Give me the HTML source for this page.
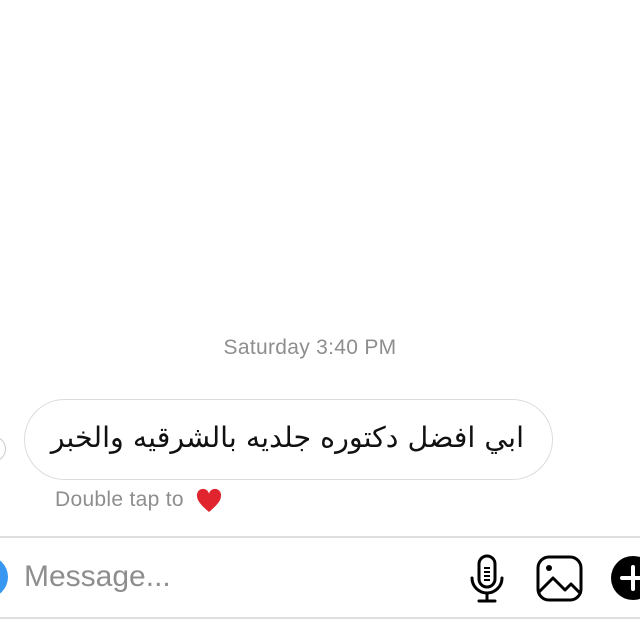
<!DOCTYPE html>
<html><head><meta charset="utf-8"><style>
html,body{margin:0;padding:0;width:640px;height:640px;background:#fff;overflow:hidden;position:relative;font-family:"Liberation Sans",sans-serif}
.ts{position:absolute;top:336px;left:0;width:620px;text-align:center;font-size:21px;color:#8e8e8e;letter-spacing:0.3px}
.bub{position:absolute;left:24px;top:399px;width:529px;height:81px;border:1.5px solid #dcdcdc;border-radius:41px;box-sizing:border-box}
.bub span{position:absolute;right:28px;top:21px;font-size:28.5px;color:#111;font-family:"DejaVu Sans","Noto Sans CJK SC",sans-serif;direction:rtl;white-space:nowrap}
.dt{position:absolute;left:55px;top:488px;font-size:21px;color:#8e8e8e;letter-spacing:0.3px}
.line{position:absolute;left:0;width:640px;height:2px;background:#dedede}
.msg{position:absolute;left:24px;top:560px;font-size:30px;color:#8e8e8e}
.blue{position:absolute;left:-34px;top:556px;width:42px;height:42px;border-radius:50%;background:#3897f0}
.avatar{position:absolute;left:-20px;top:436px;width:24px;height:24px;border-radius:50%;border:1.5px solid #ccc}
</style></head><body>
<div class="ts">Saturday 3:40 PM</div>
<div class="avatar"></div>
<div class="bub"><span>ابي افضل دكتوره جلديه بالشرقيه والخبر</span></div>
<div class="dt">Double tap to</div>
<svg style="position:absolute;left:196px;top:488px" width="26" height="26" viewBox="0 0 26 26"><path d="M13 24C6 18 1 13 1 8a6 6 0 0 1 12-2 6 6 0 0 1 12 2c0 5-5 10-12 16z" fill="#e0252e"/></svg>
<div class="line" style="top:536px"></div>
<div class="line" style="top:617px"></div>
<div class="blue"></div>
<div class="msg">Message...</div>
<svg style="position:absolute;left:466px;top:554px" width="42" height="50" viewBox="0 0 42 50">
<rect x="13" y="2" width="16" height="31" rx="8" fill="none" stroke="#000" stroke-width="3"/>
<path d="M6 24a15 15 0 0 0 30 0M21 39v8M13 47h16" fill="none" stroke="#000" stroke-width="3" stroke-linecap="round"/>
<path d="M18 14h6M18 18h6M18 22h6M18 26h6" stroke="#000" stroke-width="2"/>
</svg>
<svg style="position:absolute;left:535px;top:554px" width="50" height="50" viewBox="0 0 50 50">
<rect x="3" y="3" width="43" height="43" rx="11" fill="none" stroke="#000" stroke-width="3"/>
<circle cx="14" cy="14" r="3" fill="#000"/>
<path d="M4 38l14-14 12 12 6-6 10 10" fill="none" stroke="#000" stroke-width="3" stroke-linejoin="round"/>
</svg>
<svg style="position:absolute;left:610px;top:555px" width="46" height="46" viewBox="0 0 46 46">
<circle cx="23" cy="23" r="22" fill="#000"/>
<path d="M23 12v22M12 23h22" stroke="#fff" stroke-width="4" stroke-linecap="round"/>
</svg>
</body></html>
